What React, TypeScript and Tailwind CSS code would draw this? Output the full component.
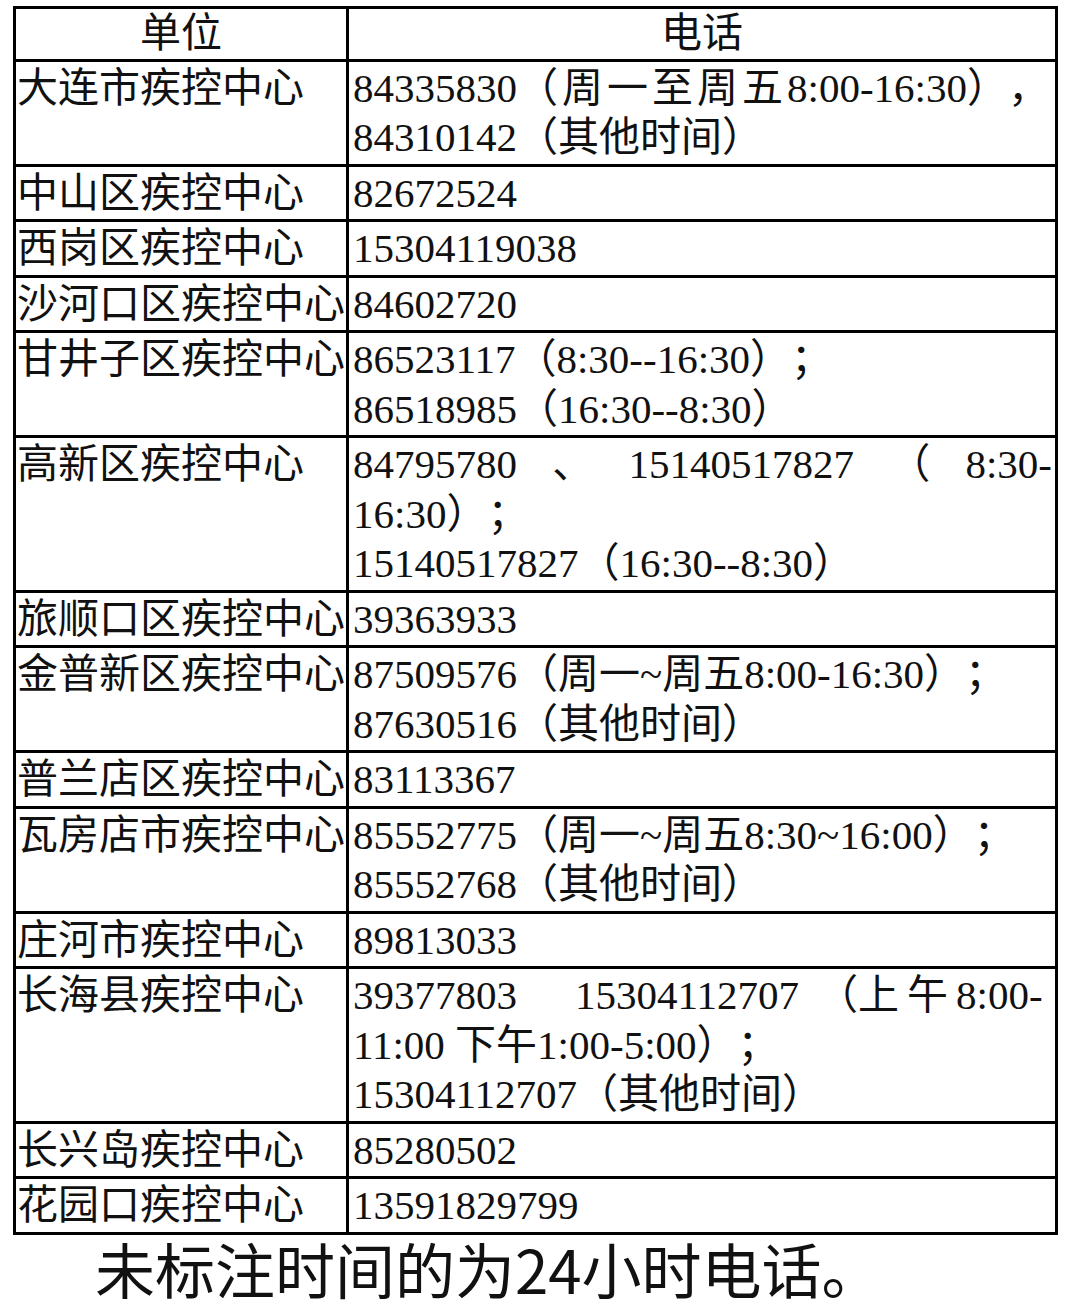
import React from "react"

type Row = { name: string; lines: React.ReactNode[] }

const rows: Row[] = [
  {
    name: "大连市疾控中心",
    lines: [
      <>84335830<span className="tracking-[4px]">（周一至周五</span>8:00-16:30），</>,
      "84310142（其他时间）",
    ],
  },
  { name: "中山区疾控中心", lines: ["82672524"] },
  { name: "西岗区疾控中心", lines: ["15304119038"] },
  { name: "沙河口区疾控中心", lines: ["84602720"] },
  { name: "甘井子区疾控中心", lines: ["86523117（8:30--16:30）；", "86518985（16:30--8:30）"] },
  {
    name: "高新区疾控中心",
    lines: [
      <div className="flex justify-between">
        <span>84795780</span>
        <span>、</span>
        <span>15140517827</span>
        <span>（</span>
        <span>8:30-</span>
      </div>,
      "16:30）；",
      "15140517827（16:30--8:30）",
    ],
  },
  { name: "旅顺口区疾控中心", lines: ["39363933"] },
  { name: "金普新区疾控中心", lines: ["87509576（周一~周五8:00-16:30）；", "87630516（其他时间）"] },
  { name: "普兰店区疾控中心", lines: ["83113367"] },
  { name: "瓦房店市疾控中心", lines: ["85552775（周一~周五8:30~16:00）；", "85552768（其他时间）"] },
  { name: "庄河市疾控中心", lines: ["89813033"] },
  {
    name: "长海县疾控中心",
    lines: [
      <div className="flex">
        <span>39377803</span>
        <span className="ml-[58px]">15304112707</span>
        <span className="ml-[18px]">（</span>
        <span>上</span>
        <span className="ml-[8px]">午</span>
        <span className="ml-[8px]">8:00-</span>
      </div>,
      "11:00 下午1:00-5:00）；",
      "15304112707（其他时间）",
    ],
  },
  { name: "长兴岛疾控中心", lines: ["85280502"] },
  { name: "花园口疾控中心", lines: ["13591829799"] },
]

export default function App() {
  return (
    <div className="min-h-screen bg-white text-[#111] font-['Liberation_Serif','Noto_Sans_CJK_SC',serif] [text-spacing-trim:space-all] pt-[6px] pl-[13px]">
      <div className="w-[1045px] border-[3px] border-black text-[41px] leading-[49.5px]">
        <div className="grid grid-cols-[330px_1fr]">
          <div className="text-center">单位</div>
          <div className="border-l-[3px] border-black text-center">电话</div>
        </div>
        {rows.map((row) => (
          <div key={row.name} className="grid grid-cols-[330px_1fr] border-t-[3px] border-black">
            <div className="whitespace-nowrap pl-[1px] pt-[2px] pb-[1px]">{row.name}</div>
            <div className="border-l-[3px] border-black pl-[4px] pr-[3px] pt-[2px] pb-[1px] whitespace-nowrap">
              {row.lines.map((line, i) => (
                <div key={i}>{line}</div>
              ))}
            </div>
          </div>
        ))}
      </div>
      <p className="mt-[3px] pl-[82px] text-[60px] leading-[60px] font-['Noto_Sans_CJK_SC',sans-serif]">
        未标注时间的为24小时电话。
      </p>
    </div>
  )
}
